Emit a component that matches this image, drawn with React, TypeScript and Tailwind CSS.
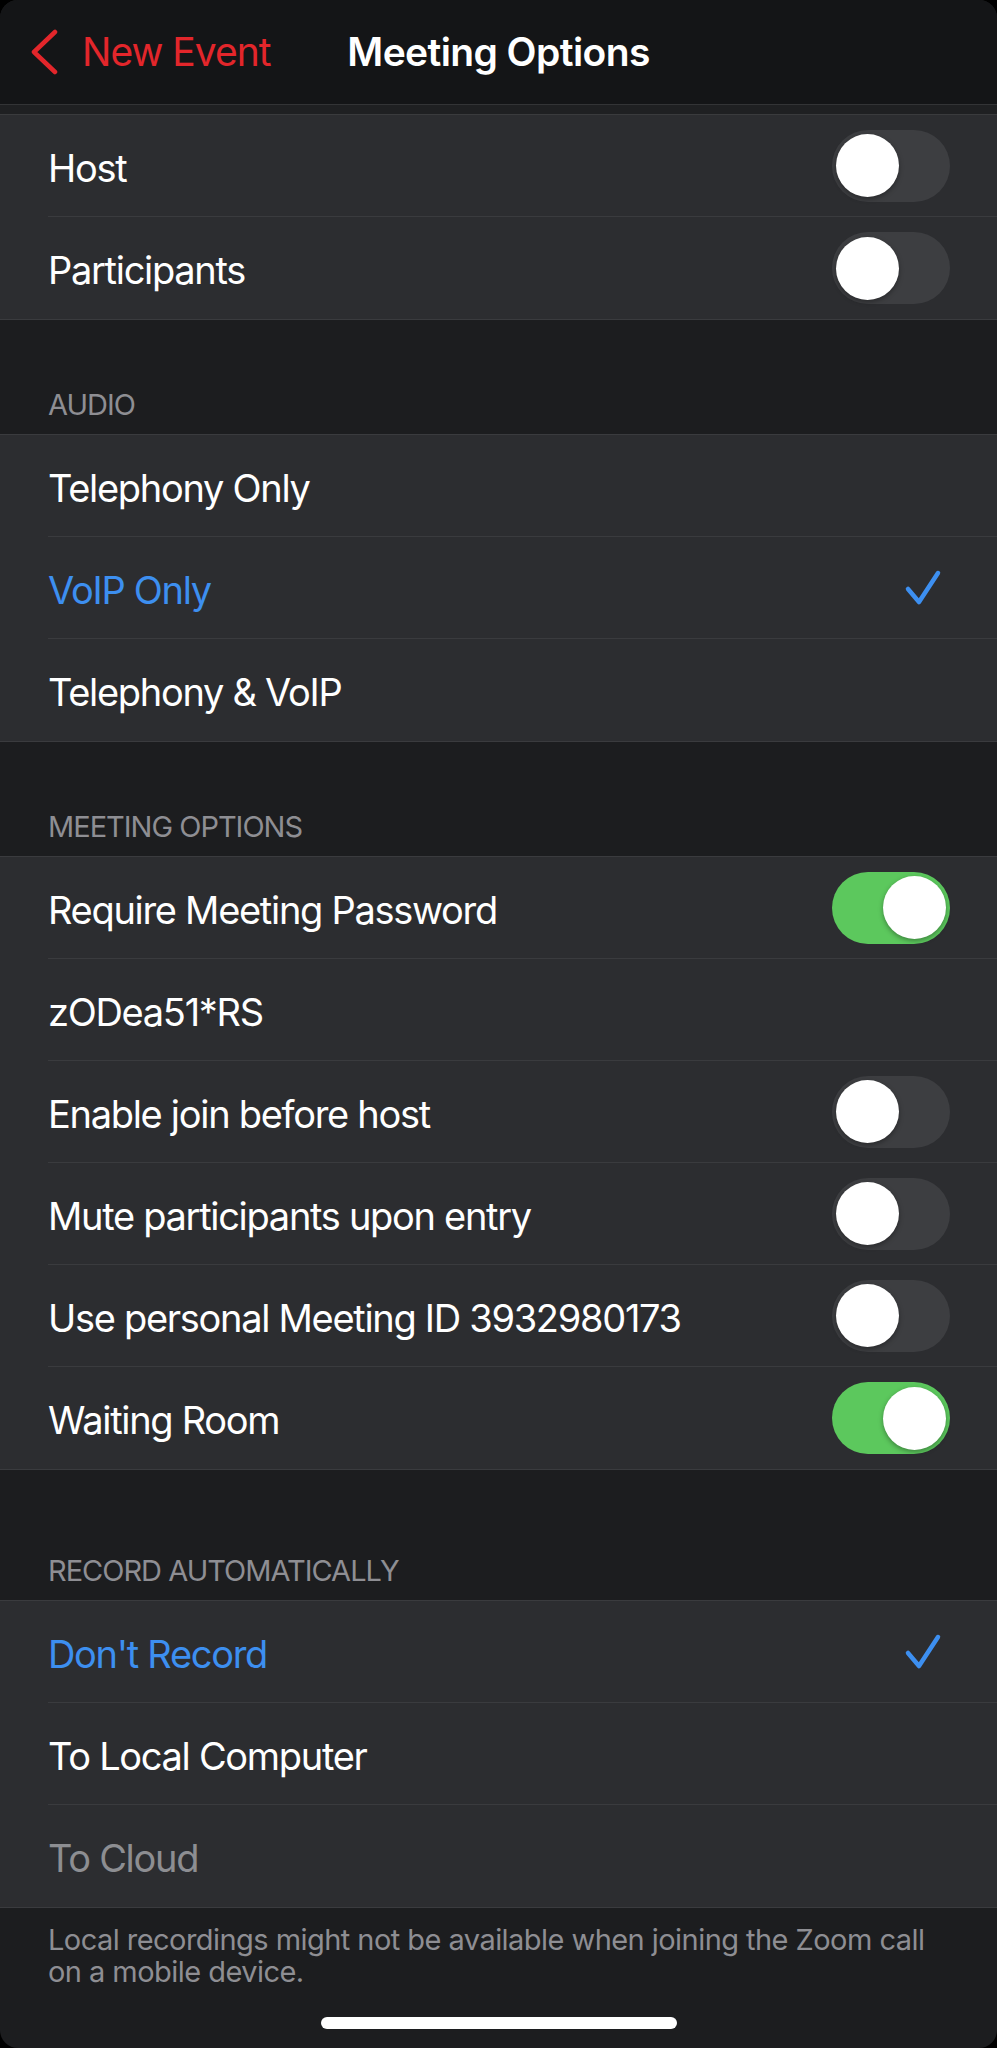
import React from "react";

type Row = {
  label: string;
  toggle?: boolean;
  checked?: boolean;
  tone?: "white" | "blue" | "gray";
};

const groups: { header?: string; gap: string; rows: Row[] }[] = [
  {
    gap: "",
    rows: [
      { label: "Host", toggle: false },
      { label: "Participants", toggle: false },
    ],
  },
  {
    header: "AUDIO",
    gap: "h-[114px]",
    rows: [
      { label: "Telephony Only" },
      { label: "VoIP Only", checked: true, tone: "blue" },
      { label: "Telephony & VoIP" },
    ],
  },
  {
    header: "MEETING OPTIONS",
    gap: "h-[114px]",
    rows: [
      { label: "Require Meeting Password", toggle: true },
      { label: "zODea51*RS" },
      { label: "Enable join before host", toggle: false },
      { label: "Mute participants upon entry", toggle: false },
      { label: "Use personal Meeting ID 3932980173", toggle: false },
      { label: "Waiting Room", toggle: true },
    ],
  },
  {
    header: "RECORD AUTOMATICALLY",
    gap: "h-[130px]",
    rows: [
      { label: "Don't Record", checked: true, tone: "blue" },
      { label: "To Local Computer" },
      { label: "To Cloud", tone: "gray" },
    ],
  },
];

const Toggle = ({ on }: { on: boolean }) => (
  <div
    className={
      "w-[118px] h-[72px] rounded-full p-[4px] flex items-center " +
      (on ? "bg-[#5cc85d] justify-end" : "bg-[#3d3e41] justify-start")
    }
  >
    <div className="w-[63px] h-[63px] rounded-full bg-white shadow-[0_2px_5px_rgba(0,0,0,0.35)]" />
  </div>
);

const Check = () => (
  <svg width="40" height="40" viewBox="0 0 40 40" fill="none" className="mr-[7px]">
    <path
      d="M5 21 L16 34 L35 5"
      stroke="#3d8ff0"
      strokeWidth="4.5"
      strokeLinecap="round"
      strokeLinejoin="round"
    />
  </svg>
);

const toneClass = {
  white: "text-white",
  blue: "text-[#3d8ff0]",
  gray: "text-[#8d8e92]",
};

export default function App() {
  return (
    <div className="w-[997px] h-[2048px] bg-black" style={{ fontFamily: "Inter, 'Liberation Sans', sans-serif" }}>
      <div className="h-full rounded-[18px] overflow-hidden bg-[#1c1d1f] flex flex-col">
        {/* nav bar */}
        <div className="h-[105px] bg-[#141517] border-b border-[#333436] grid grid-cols-[1fr_auto_1fr] items-center">
          <div className="flex items-center pl-[30px] gap-[22px] text-[#e3262b] text-[39px] tracking-[-1px]">
            <svg width="30" height="46" viewBox="0 0 30 46" fill="none">
              <path d="M25 3 L4 23 L25 43" stroke="#e3262b" strokeWidth="4.5" strokeLinecap="round" strokeLinejoin="round" />
            </svg>
            <span>New Event</span>
          </div>
          <div className="text-white text-[39px] font-semibold tracking-[-0.6px]">Meeting Options</div>
          <div />
        </div>
        <div className="h-[10px] bg-[#1f2022] border-b border-[#3a3b3d]" />

        {groups.map((g, gi) => (
          <div key={gi}>
            {g.header && (
              <div className={g.gap + " flex items-end pl-[48px] pb-[14px]"}>
                <span className="text-[29px] leading-[30px] text-[#8e8e93] tracking-[-1px]">{g.header}</span>
              </div>
            )}
            <div className={"bg-[#2c2d30] border-b border-[#3a3b3e] " + (gi > 0 ? "border-t" : "")}>
              {g.rows.map((r, ri) => (
                <div key={ri} className="pl-[48px]">
                  <div
                    className={
                      "h-[102px] flex items-center justify-between pr-[47px] " +
                      (ri < g.rows.length - 1 ? "border-b border-[#3a3b3e]" : "")
                    }
                  >
                    <span className={"pt-[5px] text-[38px] tracking-[-1.3px] " + toneClass[r.tone ?? "white"]}>{r.label}</span>
                    {r.toggle !== undefined && <Toggle on={r.toggle} />}
                    {r.checked && <Check />}
                  </div>
                </div>
              ))}
            </div>
          </div>
        ))}

        <div className="px-[48px] pt-[16px] text-[29px] leading-[32px] text-[#8e8e93] tracking-[-0.55px]">
          Local recordings might not be available when joining the Zoom call on a mobile device.
        </div>
        <div className="flex-1" />
        <div className="flex justify-center pb-[19px]">
          <div className="w-[356px] h-[12px] rounded-full bg-white" />
        </div>
      </div>
    </div>
  );
}
